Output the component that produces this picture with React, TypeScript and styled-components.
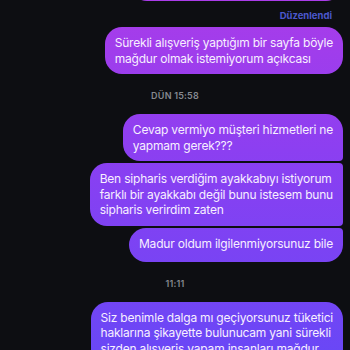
import React from 'react'
import styled, { createGlobalStyle } from 'styled-components'

const GlobalStyle = createGlobalStyle`
  html, body {
    margin: 0;
    padding: 0;
    background: #0d0e12;
    overflow: hidden;
  }
`

type Item =
  | { kind: 'msg'; text: string; pos: 'single' | 'first' | 'middle' | 'last' }
  | { kind: 'time'; text: string }
  | { kind: 'edited' }

const ITEMS: Item[] = [
  { kind: 'msg', text: 'Siparişim hâlâ gelmedi, iade de yok\nkimse dönüş yapmıyor', pos: 'single' },
  { kind: 'edited' },
  {
    kind: 'msg',
    text: 'Sürekli alışveriş yaptığım bir sayfa böyle\nmağdur olmak istemiyorum açıkcası',
    pos: 'single'
  },
  { kind: 'time', text: 'DÜN 15:58' },
  { kind: 'msg', text: 'Cevap vermiyo müşteri hizmetleri ne\nyapmam gerek???', pos: 'first' },
  {
    kind: 'msg',
    text: 'Ben sipharis verdiğim ayakkabıyı istiyorum\nfarklı bir ayakkabı değil bunu istesem bunu\nsipharis verirdim zaten',
    pos: 'middle'
  },
  { kind: 'msg', text: 'Madur oldum ilgilenmiyorsunuz bile', pos: 'last' },
  { kind: 'time', text: '11:11' },
  {
    kind: 'msg',
    text: 'Siz benimle dalga mı geçiyorsunuz tüketici\nhaklarına şikayette bulunucam yani sürekli\nsizden alışveriş yapam insanları mağdur\nediyorsunuz',
    pos: 'single'
  }
]

export default function App() {
  const rows = ITEMS.map((item, idx) => {
    if (item.kind === 'time') return <TimeStamp key={idx}>{item.text}</TimeStamp>
    if (item.kind === 'edited') return <Edited key={idx}>Düzenlendi</Edited>
    return (
      <Bubble key={idx} $pos={item.pos}>
        {item.text}
      </Bubble>
    )
  })

  return (
    <>
      <GlobalStyle />
      <Screen>
        <Thread>{rows}</Thread>
      </Screen>
    </>
  )
}

const Screen = styled.div`
  width: 350px;
  height: 350px;
  overflow: hidden;
  background: #0d0e12;
  font-family: Inter, 'Noto Sans', sans-serif;
`

const Thread = styled.div`
  display: flex;
  flex-direction: column;
  align-items: flex-end;
  padding: 0 7px 0 0;
  margin-top: -46px;
`

const Bubble = styled.div<{ $pos: 'single' | 'first' | 'middle' | 'last' }>`
  box-sizing: border-box;
  padding: 8px 10px 8px 10px;
  white-space: pre;
  font-size: 12px;
  line-height: 15.5px;
  letter-spacing: -0.2px;
  color: #f7efff;
  background: linear-gradient(180deg, #aa3ce9 0px, #8c3ff1 150px, #6a47f6 350px);
  background-attachment: fixed;
  border-radius: 17px;
  border-top-right-radius: ${(p) => (p.$pos === 'middle' || p.$pos === 'last' ? '4px' : '17px')};
  border-bottom-right-radius: ${(p) => (p.$pos === 'middle' || p.$pos === 'first' ? '4px' : '17px')};
  margin-top: ${(p) => (p.$pos === 'middle' || p.$pos === 'last' ? '2px' : '0')};
  min-height: 34px;
`

const Edited = styled.div`
  margin: 9px 11px 5px 0;
  font-size: 9.5px;
  line-height: 12px;
  font-weight: 700;
  color: #4b58cc;
`

const TimeStamp = styled.div`
  align-self: center;
  margin: 16px 0 12px 7px;
  font-size: 9px;
  line-height: 12px;
  font-weight: 600;
  letter-spacing: 0.2px;
  color: #868990;
`
